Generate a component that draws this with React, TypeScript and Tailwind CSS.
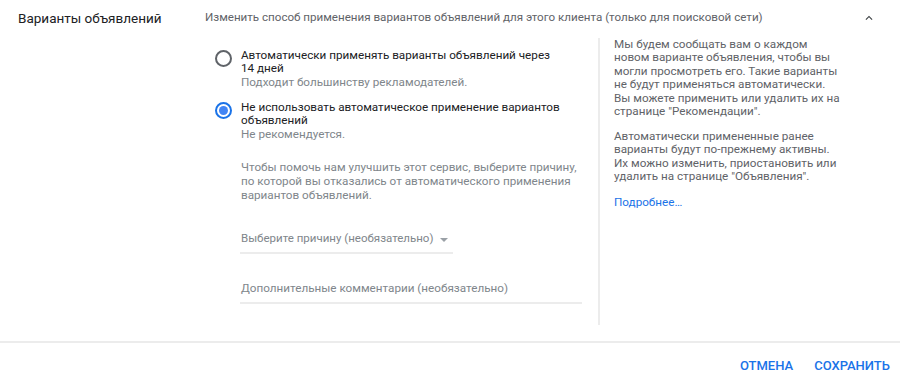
import React, { useState } from 'react';

type Option = {
  id: string;
  lines: Array<string>;
  hint: string;
};

const options: Array<Option> = [
  {
    id: 'auto',
    lines: ['Автоматически применять варианты объявлений через', '14 дней'],
    hint: 'Подходит большинству рекламодателей.',
  },
  {
    id: 'manual',
    lines: ['Не использовать автоматическое применение вариантов', 'объявлений'],
    hint: 'Не рекомендуется.',
  },
];

const Radio = ({ checked }: { checked: boolean }): React.ReactElement => (
  <span
    className={
      checked
        ? 'flex h-[17px] w-[17px] items-center justify-center rounded-full border-2 border-[#1a73e8]'
        : 'flex h-[17px] w-[17px] items-center justify-center rounded-full border-2 border-[#5f6368]'
    }
  >
    {checked ? <span className="h-[9px] w-[9px] rounded-full bg-[#4285f4]" /> : <></>}
  </span>
);

const App = (): React.ReactElement => {
  const [selected, setSelected] = useState<string>('manual');

  return (
    <div className="flex h-[388px] w-[900px] flex-col bg-white font-['Roboto',sans-serif] text-[#202124]">
      <div className="flex h-[341px] flex-col">
        <div className="flex h-9 items-center">
          <h2 className="w-[205px] pl-[18px] text-[13.5px]">Варианты объявлений</h2>
          <p className="flex-1 text-[11.6px] text-[#5f6368]">
            Изменить способ применения вариантов объявлений для этого клиента (только для поисковой сети)
          </p>
          <svg viewBox="0 0 24 24" className="mr-[24px] h-[14px] w-[14px] fill-[#3c4043]">
            <path d="M7.41 15.41L12 10.83l4.59 4.58L18 14l-6-6-6 6z" />
          </svg>
        </div>

        <div className="flex pl-[205px]">
          <div className="w-[393px] shrink-0">
            {options.map((o, index) => (
              <div
                key={o.id}
                className={index === 0 ? 'mt-[12.5px] flex cursor-pointer' : 'mt-[11.5px] flex cursor-pointer'}
                onClick={() => setSelected(o.id)}
              >
                <div className="flex w-9 justify-center pt-[1px]">
                  <Radio checked={selected === o.id} />
                </div>
                <div className="whitespace-nowrap text-[11.7px] leading-[13.5px]">
                  {o.lines.map((line, i) => (
                    <div key={i}>{line}</div>
                  ))}
                  <div className="text-[#80868b]">{o.hint}</div>
                </div>
              </div>
            ))}

            <p className="ml-9 mt-[19px] w-[342px] text-[11.7px] leading-[14.2px] text-[#80868b]">
              Чтобы помочь нам улучшить этот сервис, выберите причину, по которой вы отказались от
              автоматического применения вариантов объявлений.
            </p>

            <div className="ml-[35px] mt-[25px] flex h-[26px] w-[213px] items-center border-b-2 border-[#ececec] pb-[1px] text-[11.5px] text-[#80868b]">
              <span className="pl-[1px]">Выберите причину (необязательно)</span>
              <span className="ml-[7px] mt-[1px] h-0 w-0 border-x-[4px] border-t-[4px] border-x-transparent border-t-[#9aa0a6]" />
            </div>

            <div className="ml-[35px] mt-[24px] flex h-[26px] w-[342px] items-center border-b-2 border-[#ececec] pb-[1px] pl-[1px] text-[11.7px] text-[#80868b]">
              Дополнительные комментарии (необязательно)
            </div>
          </div>

          <div className="mt-[2px] h-[287px] w-[260px] shrink-0 whitespace-nowrap border-l-2 border-[#ececec] pl-[14px] text-[11.7px] leading-[13.4px] text-[#5f6368]">
            <p>
              Мы будем сообщать вам о каждом
              <br />
              новом варианте объявления, чтобы вы
              <br />
              могли просмотреть его. Такие варианты
              <br />
              не будут применяться автоматически.
              <br />
              Вы можете применить или удалить их на
              <br />
              странице "Рекомендации".
            </p>
            <p className="mt-[11.5px]">
              Автоматически примененные ранее
              <br />
              варианты будут по-прежнему активны.
              <br />
              Их можно изменить, приостановить или
              <br />
              удалить на странице "Объявления".
            </p>
            <a className="mt-[12.5px] block text-[#1a73e8]" href="#">
              Подробнее…
            </a>
          </div>
        </div>
      </div>

      <div className="flex flex-1 items-center justify-end gap-[21px] border-t-2 border-[#ececec] pr-[10px] text-[13px] font-medium text-[#1a73e8]">
        <button type="button" className="uppercase">
          Отмена
        </button>
        <button type="button" className="uppercase">
          Сохранить
        </button>
      </div>
    </div>
  );
};

export default App;
